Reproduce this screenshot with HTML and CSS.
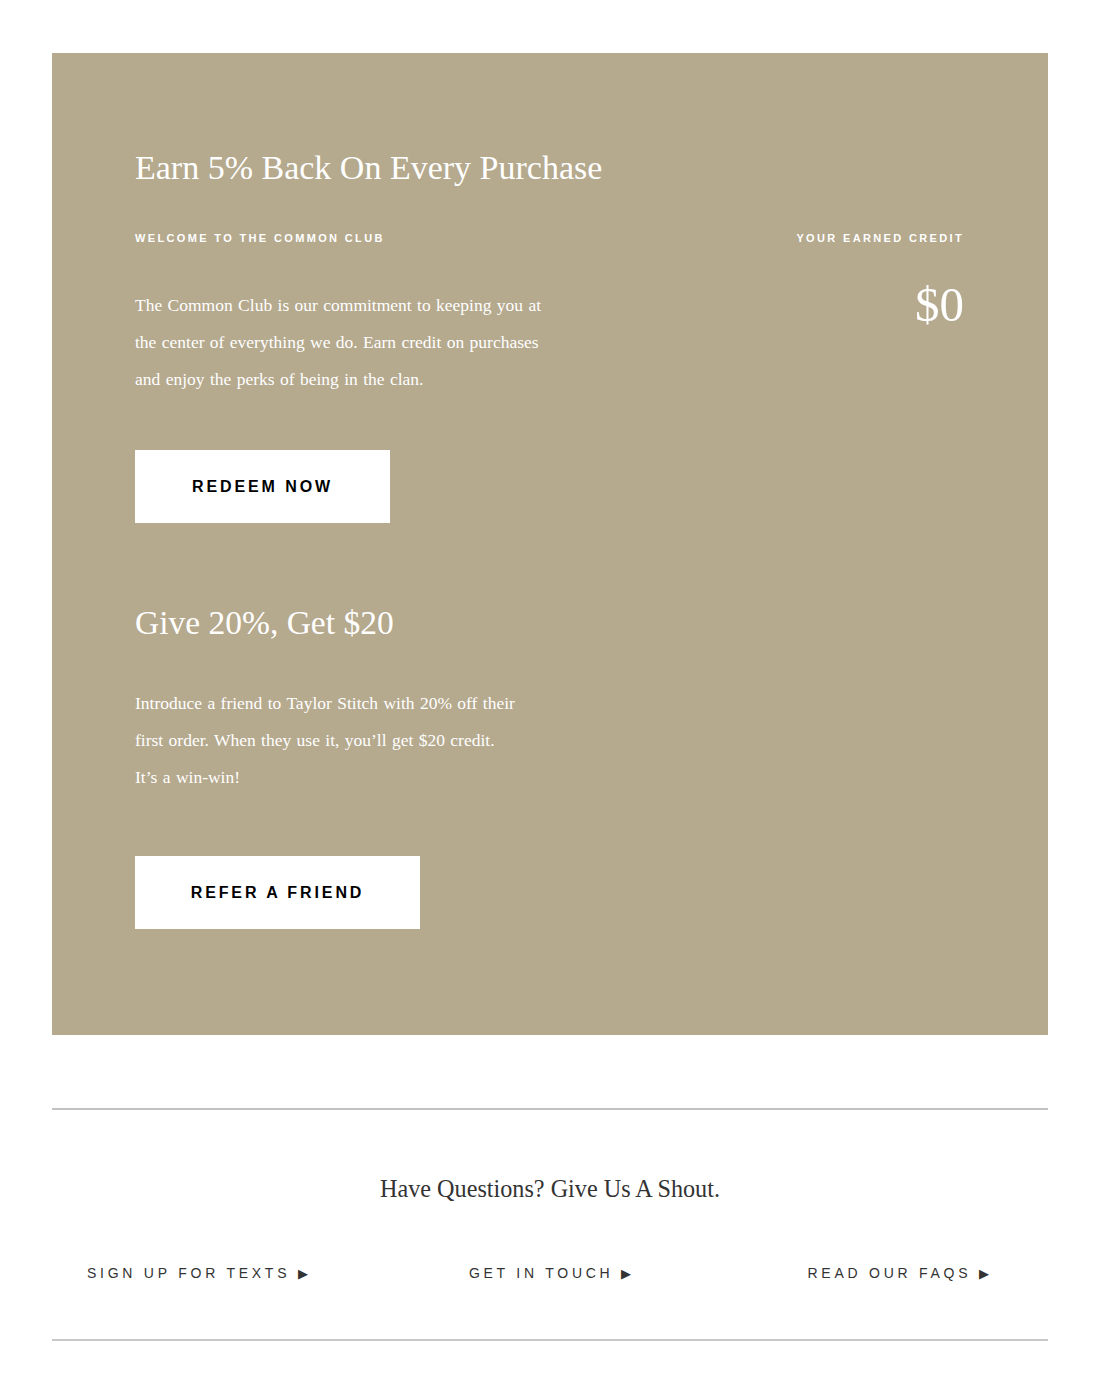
FILE: index.html
```html
<!DOCTYPE html>
<html lang="en">
<head>
<meta charset="utf-8">
<title>The Common Club</title>
<link rel="stylesheet" href="styles.css">
</head>
<body>
<main class="page">
  <section class="club">
    <h1 class="club-title">Earn 5% Back On Every Purchase</h1>
    <div class="club-row">
      <div class="club-main">
        <p class="eyebrow">Welcome to the Common Club</p>
        <p class="club-text">The Common Club is our commitment to keeping you at the center of everything we do. Earn credit on purchases and enjoy the perks of being in the clan.</p>
        <a class="btn btn-redeem" href="#">Redeem Now</a>
      </div>
      <div class="club-credit">
        <p class="eyebrow">Your Earned Credit</p>
        <p class="credit-amount">$0</p>
      </div>
    </div>
    <h2 class="refer-title">Give 20%, Get $20</h2>
    <p class="club-text refer-text">Introduce a friend to Taylor Stitch with 20% off their first order. When they use it, you’ll get $20 credit. It’s a win-win!</p>
    <a class="btn btn-refer" href="#">Refer a Friend</a>
  </section>

  <section class="contact">
    <h3 class="contact-title">Have Questions? Give Us A Shout.</h3>
    <nav class="contact-links">
      <a class="contact-link link-start" href="#">Sign up for texts <span class="arrow">▶</span></a>
      <a class="contact-link link-center" href="#">Get in touch <span class="arrow">▶</span></a>
      <a class="contact-link link-end" href="#">Read our FAQs <span class="arrow">▶</span></a>
    </nav>
  </section>
</main>
</body>
</html>
```
FILE: styles.css
```css
* { box-sizing: border-box; }

body {
  margin: 0;
  background: #ffffff;
  font-family: "Liberation Serif", Georgia, serif;
}

.page {
  width: 996px;
  margin: 53px auto 0;
}

.club {
  background: #b5a98e;
  color: #ffffff;
  padding: 95px 84px 106px 83px;
}

.club-title {
  margin: 0 0 43px;
  font-weight: 400;
  font-size: 34px;
  line-height: 40px;
}

.club-row {
  display: flex;
  justify-content: space-between;
}

.eyebrow {
  margin: 0;
  font-family: "Liberation Sans", Arial, sans-serif;
  font-weight: 700;
  font-size: 11px;
  line-height: 14px;
  letter-spacing: 2.35px;
  text-transform: uppercase;
}

.club-main .eyebrow { margin-bottom: 42px; }

.club-text {
  margin: 0;
  max-width: 412px;
  font-size: 17.5px;
  line-height: 37px;
  word-spacing: 1px;
}

.btn {
  display: inline-flex;
  align-items: center;
  justify-content: center;
  height: 73px;
  background: #ffffff;
  color: #000000;
  text-decoration: none;
  font-family: "Liberation Sans", Arial, sans-serif;
  font-weight: 700;
  font-size: 16px;
  letter-spacing: 2.9px;
  text-transform: uppercase;
}

.btn-redeem { width: 255px; margin-top: 52px; }
.btn-refer { width: 285px; margin-top: 60px; }

.club-credit {
  display: flex;
  flex-direction: column;
  align-items: flex-end;
}

.credit-amount {
  margin: 35px 0 0;
  font-size: 49px;
  line-height: 50px;
}

.refer-title {
  margin: 80px 0 42px;
  font-weight: 400;
  font-size: 33.5px;
  line-height: 40px;
}

.refer-text { max-width: 384px; }

.contact {
  margin-top: 73px;
  border-top: 2px solid #c2c2c2;
  border-bottom: 2px solid #c8c8c8;
  padding: 64px 0 55px;
}

.contact-title {
  margin: 0;
  text-align: center;
  font-weight: 400;
  font-size: 24.2px;
  line-height: 30px;
  color: #333333;
}

.contact-links {
  display: grid;
  grid-template-columns: repeat(3, 1fr);
  margin-top: 59px;
}

.contact-link {
  font-family: "Liberation Sans", Arial, sans-serif;
  font-size: 14px;
  line-height: 20px;
  letter-spacing: 3.75px;
  text-transform: uppercase;
  color: #333333;
  text-decoration: none;
  white-space: nowrap;
}

.link-start { justify-self: start; margin-left: 35px; }
.link-center { justify-self: center; }
.link-end { justify-self: end; margin-right: 59px; }

.arrow {
  font-size: 13px;
  letter-spacing: 0;
  color: #333333;
}
```
